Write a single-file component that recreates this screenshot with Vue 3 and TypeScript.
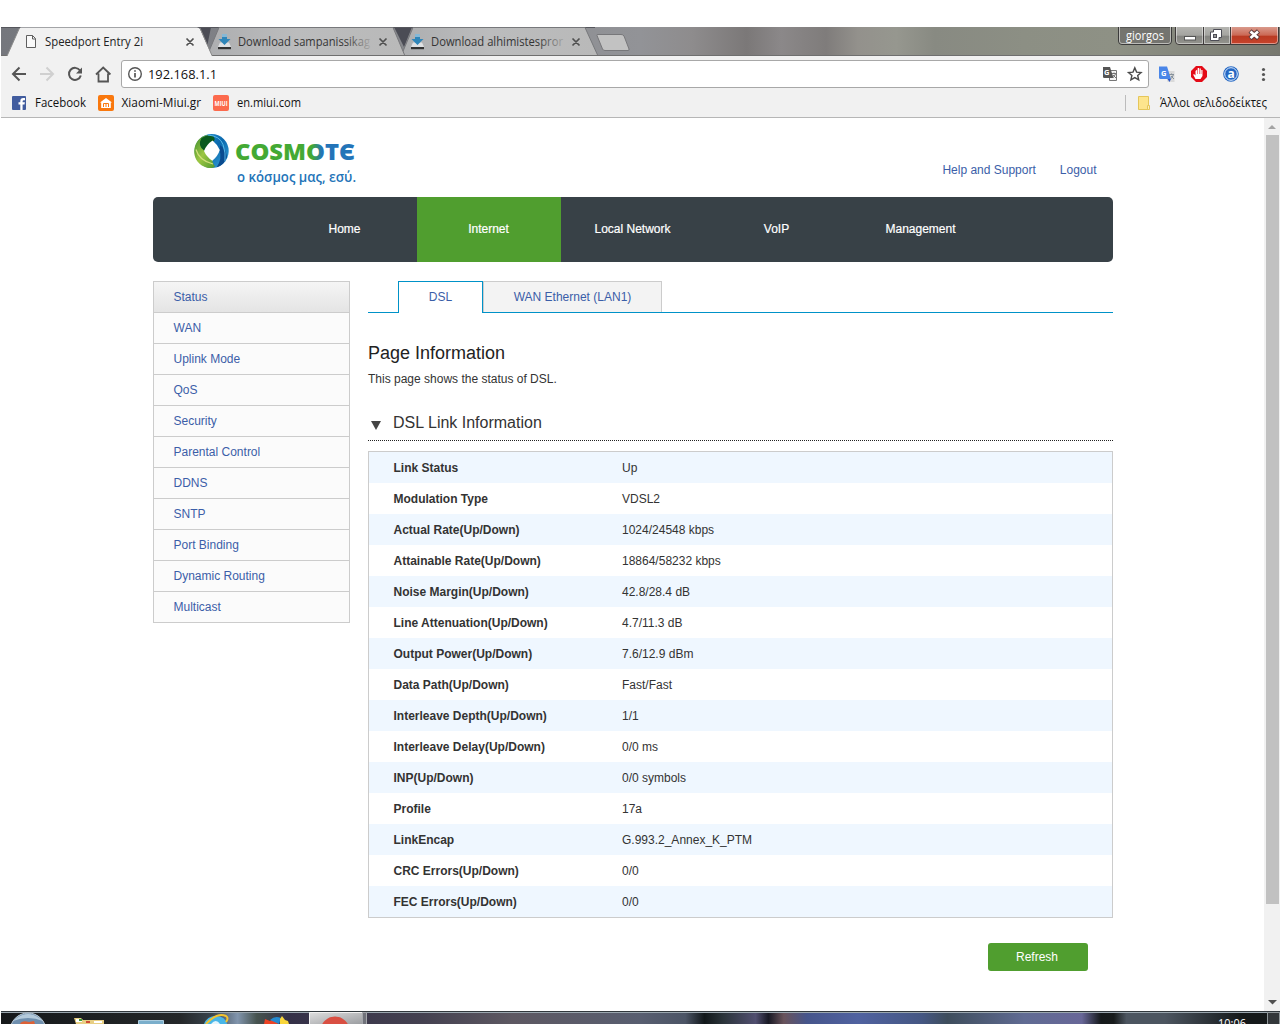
<script setup lang="ts">
interface Row {
  label: string
  value: string
}

const navItems: string[] = ['Home', 'Internet', 'Local Network', 'VoIP', 'Management']
const sideItems: string[] = [
  'Status', 'WAN', 'Uplink Mode', 'QoS', 'Security', 'Parental Control',
  'DDNS', 'SNTP', 'Port Binding', 'Dynamic Routing', 'Multicast',
]
const rows: Row[] = [
  { label: 'Link Status', value: 'Up' },
  { label: 'Modulation Type', value: 'VDSL2' },
  { label: 'Actual Rate(Up/Down)', value: '1024/24548 kbps' },
  { label: 'Attainable Rate(Up/Down)', value: '18864/58232 kbps' },
  { label: 'Noise Margin(Up/Down)', value: '42.8/28.4 dB' },
  { label: 'Line Attenuation(Up/Down)', value: '4.7/11.3 dB' },
  { label: 'Output Power(Up/Down)', value: '7.6/12.9 dBm' },
  { label: 'Data Path(Up/Down)', value: 'Fast/Fast' },
  { label: 'Interleave Depth(Up/Down)', value: '1/1' },
  { label: 'Interleave Delay(Up/Down)', value: '0/0 ms' },
  { label: 'INP(Up/Down)', value: '0/0 symbols' },
  { label: 'Profile', value: '17a' },
  { label: 'LinkEncap', value: 'G.993.2_Annex_K_PTM' },
  { label: 'CRC Errors(Up/Down)', value: '0/0' },
  { label: 'FEC Errors(Up/Down)', value: '0/0' },
]
</script>

<template>
  <div class="screen">
    <!-- Window frame with the tab strip -->
    <svg class="tabstrip" width="1280" height="29" viewBox="0 27 1280 29">
      <defs>
        <linearGradient id="glass" x1="0" x2="1" y1="0" y2="0">
          <stop offset="0" stop-color="#75777d" />
          <stop offset=".5" stop-color="#929397" />
          <stop offset=".54" stop-color="#8e8c8d" />
          <stop offset=".583" stop-color="#7b7878" />
          <stop offset=".61" stop-color="#8b8889" />
          <stop offset=".645" stop-color="#7f7c7b" />
          <stop offset=".67" stop-color="#93918c" />
          <stop offset=".7" stop-color="#96978f" />
          <stop offset=".73" stop-color="#888a82" />
          <stop offset=".8" stop-color="#8c8f84" />
          <stop offset=".87" stop-color="#8e9185" />
          <stop offset="1" stop-color="#77786f" />
        </linearGradient>
        <linearGradient id="inactive" x1="0" x2="1" y1="0" y2="0">
          <stop offset="0" stop-color="#adaeb0" />
          <stop offset=".45" stop-color="#bbbcbd" />
          <stop offset="1" stop-color="#b9b9b9" />
        </linearGradient>
        <linearGradient id="closeRed" x1="0" x2="0" y1="0" y2="1">
          <stop offset="0" stop-color="#d99a8c" />
          <stop offset=".48" stop-color="#cb6753" />
          <stop offset=".5" stop-color="#b93a22" />
          <stop offset="1" stop-color="#c8432c" />
        </linearGradient>
        <linearGradient id="capBtn" x1="0" x2="0" y1="0" y2="1">
          <stop offset="0" stop-color="#b4b4b0" />
          <stop offset=".48" stop-color="#a4a4a0" />
          <stop offset=".5" stop-color="#83837f" />
          <stop offset="1" stop-color="#95958f" />
        </linearGradient>
        <linearGradient id="fadeA" gradientUnits="userSpaceOnUse" x1="345" x2="371" y1="0" y2="0">
          <stop offset="0" stop-color="#333" /><stop offset="1" stop-color="#333" stop-opacity=".1" />
        </linearGradient>
        <linearGradient id="fadeB" gradientUnits="userSpaceOnUse" x1="538" x2="565" y1="0" y2="0">
          <stop offset="0" stop-color="#333" /><stop offset="1" stop-color="#333" stop-opacity=".1" />
        </linearGradient>
        <g id="dl">
          <path d="M2 8.500h9l2 4.500H0z" fill="#dfe1e3" />
          <path d="M0 13h13v2.200H0z" fill="#333" />
          <path d="M4 0h5v5h3.500L6.500 11 .5 5H4z" fill="#2f86b9" />
          <path d="M4 0h5v3H4z" fill="#86b8d6" />
        </g>
      </defs>
      <rect x="1" y="27" width="1279" height="29" fill="url(#glass)" />
      <path d="M204 27h208l-8 20-10-20zM199 27h12l-4 20z" fill="#4b4c55" />
      <path d="M1 27.500H595" stroke="#55565c" />
      <path d="M401 56L413 27.500H585L598 56z" fill="url(#inactive)" stroke="#77787b" />
      <path d="M207 56L219 27.500H393L405 56z" fill="url(#inactive)" stroke="#77787b" />
      <path d="M1 55.500H1280" stroke="#6f6f6f" />
      <path d="M7 56L19 29Q19.500 27.500 21 27.500H197Q199 27.500 200 29L212 56z" fill="#f1f1f1" />
      <path d="M7 56L19.500 28M200 28L212 55.500" fill="none" stroke="#8b8b8b" />
      <path d="M597 35.500Q596.500 34.500 598 34.500H621Q623 34.500 624 36L629 49Q629.500 50.500 628 50.500H605Q603 50.500 602.500 49z" fill="#c2c2c2" stroke="#77777a" />

      <path d="M26.500 35.500h6l3 3v9h-9zM32.500 35.500v3.500h3" fill="#fafafa" stroke="#5f5f5f" />
      <use href="#dl" x="218" y="34" />
      <use href="#dl" x="411" y="34" />
      <g class="ui">
        <text x="45" y="46" textLength="98" lengthAdjust="spacingAndGlyphs" fill="#222">Speedport Entry 2i</text>
        <text x="238" y="46" textLength="132" lengthAdjust="spacingAndGlyphs" fill="url(#fadeA)">Download sampanissikag</text>
        <text x="431" y="46" textLength="132" lengthAdjust="spacingAndGlyphs" fill="url(#fadeB)">Download alhimistespror</text>
      </g>
      <path d="M186.500 38.500l7 7m0-7l-7 7M379.500 38.500l7 7m0-7l-7 7M572.500 38.500l7 7m0-7l-7 7" stroke="#505050" stroke-width="1.700" />

      <path d="M1118.500 27V41q0 3.500 3.500 3.500h46q3.500 0 3.500-3.500V27z" fill="#74746f" stroke="#3b3b3b" />
      <path d="M1119.500 27V41q0 2.500 2.500 2.500h46q2.500 0 2.500-2.500V27" fill="none" stroke="#bcbcb8" />
      <text class="ui" x="1126" y="40" textLength="38" lengthAdjust="spacingAndGlyphs" fill="#fff">giorgos</text>
      <path d="M1176 27h27.500v17.500H1179q-3.500 0-3.500-3.500V27z" fill="url(#capBtn)" />
      <path d="M1204 27h26v17.500h-26z" fill="url(#capBtn)" />
      <path d="M1231 27h47v14q0 3.500-3.500 3.500H1231z" fill="url(#closeRed)" />
      <path d="M1175.500 27V41q0 3.500 3.500 3.500h96q3.500 0 3.500-3.500V27M1203.500 27v17M1230.500 27v17" fill="none" stroke="#3f3b3b" />
      <path d="M1176.500 27V41q0 2.500 2.500 2.500h23.500V27M1204.500 27v16.500h25V27M1231.500 27v16.500h43q3-.2 3-2.500V27" fill="none" stroke="#fff" stroke-opacity=".45" />
      <rect x="1184.500" y="36.500" width="11" height="3.500" fill="#fff" stroke="#555" />
      <path d="M1213.500 29.500h8v8h-2.500v3h-8.500v-8.500h3z" fill="#fff" stroke="#4c4c55" />
      <rect x="1213.500" y="34.500" width="3" height="3" fill="#999" stroke="#4c4c55" />
      <path d="M1250 31l8.500 7.500M1258.500 31l-8.500 7.500" stroke="#5a3a3c" stroke-width="4.600" />
      <path d="M1250.500 31.500l7.500 6.500M1258 31.500l-7.500 6.500" stroke="#fff" stroke-width="2.700" />
    </svg>

    <!-- Address toolbar -->
    <div class="toolbar">
      <svg class="navicons" width="120" height="34" viewBox="1 56 120 34" fill="none" stroke="#555" stroke-width="2">
        <path d="M26 74H13.500M19.500 67.500L13 74l6.500 6.500" />
        <path d="M40 74h12.500M46.500 67.500L53 74l-6.500 6.500" stroke="#d0d0d0" />
        <path d="M80 70.500a6 6 0 1 0 .8 5" />
        <path d="M82 67.500v6h-6z" fill="#555" stroke="none" />
        <path d="M96 74.500L103.200 67.500l7.200 7M98.500 73.500v8h9.500v-8" stroke-width="1.800" />
      </svg>
      <div class="omnibox">
        <svg width="16" height="16" viewBox="0 0 16 16" fill="none" stroke="#555" stroke-width="1.400">
          <circle cx="8" cy="8" r="6.300" /><path d="M8 7v4.500M8 4.300v1.500" stroke-width="1.700" />
        </svg>
        <svg class="url" width="72" height="20"><text class="addr" x="0" y="15" textLength="69" lengthAdjust="spacingAndGlyphs">192.168.1.1</text></svg>
        <svg class="boxicons" width="44" height="20" viewBox="1101 64 44 20">
          <path d="M1109.500 70.500h7v10h-7z" fill="#f4f4f4" stroke="#777" />
          <path d="M1103 67h7l3.500 11h-9.200q-1.300 0-1.300-1.300z" fill="#555" />
          <text x="1104" y="75" class="mini" fill="#fff">G</text>
          <path d="M1112 73.500h4m-2-1v1m1.500.5q-1 2.500-3 4m.5-3l3 3" stroke="#666" stroke-width=".9" fill="none" />
          <path d="M1134.800 67.900l1.800 4.200 4.500.4-3.400 3 1 4.400-3.900-2.300-3.900 2.300 1-4.400-3.400-3 4.500-.4z" fill="none" stroke="#4b4b4b" stroke-width="1.400" />
        </svg>
      </div>
      <svg width="130" height="34" viewBox="1150 56 130 34">
        <path d="M1165 71h9.500v11h-7z" fill="#dadada" />
        <path d="M1159 66.500h8l4 12.500h-10.500q-1.500 0-1.500-1.500z" fill="#4a86e8" />
        <path d="M1167.500 79h3.500l-1.500 3z" fill="#2a56c6" />
        <text x="1161" y="76" class="mini" fill="#fff">G</text>
        <path d="M1169 74.500h5m-2.500-1v1m2 0q-1 3-3 4.500m.5-3l3 3" stroke="#85909a" fill="none" />
        <path d="M1196 66h6l5 5v6l-5 5h-6l-5-5v-6z" fill="#e40b17" />
        <path d="M1195.500 71v4.500l-1.500-1.500-.8.800 2.300 4.200h5l2-3v-6h-1.200v4h-.5v-5.500h-1.300V74h-.5v-6h-1.300v6h-.5v-4.500z" fill="#fff" />
        <circle cx="1231" cy="74" r="7.800" fill="#2467c3" />
        <circle cx="1231" cy="74" r="6.300" fill="none" stroke="#dcecff" />
        <text x="1227.400" y="77.700" class="aicon" fill="#fff">a</text>
        <g fill="#555"><circle cx="1263.500" cy="69.500" r="1.600" /><circle cx="1263.500" cy="74.500" r="1.600" /><circle cx="1263.500" cy="79.500" r="1.600" /></g>
      </svg>
    </div>

    <!-- Bookmarks bar -->
    <div class="bookmarks">
      <svg width="1279" height="27" viewBox="1 90 1279 27">
        <rect x="12" y="96" width="14" height="14" rx="1" fill="#415c9e" />
        <path d="M20.300 110v-5.500H18.500v-2.200h1.800v-1.300q0-3 3-3h1.700v2.200h-1.200q-1.200 0-1.200 1.200v.9h2.300l-.4 2.200h-1.900v5.500z" fill="#fff" />
        <rect x="98" y="95" width="16" height="16" rx="2" fill="#f9780e" />
        <path d="M106 98l6 4.500h-1.200v5.500h-9.600v-5.500H100z" fill="#fff" />
        <path d="M103.500 107v-3.500h5v3.500M106 104v3" stroke="#f9780e" fill="none" />
        <rect x="213" y="95" width="16" height="16" rx="2" fill="#fc6a4d" />
        <text x="214.500" y="106" class="mini" textLength="13" lengthAdjust="spacingAndGlyphs" fill="#fff">MIUI</text>
        <path d="M1125.500 95v16" stroke="#bcbcbc" />
        <path d="M1138.500 96.500h10v13h-10z" fill="#fde58d" stroke="#e5c65a" />
        <path d="M1147.500 105.500h2v4h-2z" fill="#fdf0bd" stroke="#e5c65a" />
        <g class="ui" fill="#111">
          <text x="35" y="107" textLength="51" lengthAdjust="spacingAndGlyphs">Facebook</text>
          <text x="121.500" y="107" textLength="79.500" lengthAdjust="spacingAndGlyphs">Xiaomi-Miui.gr</text>
          <text x="237" y="107" textLength="64" lengthAdjust="spacingAndGlyphs">en.miui.com</text>
          <text x="1160" y="107" textLength="107" lengthAdjust="spacingAndGlyphs">Άλλοι σελιδοδείκτες</text>
        </g>
      </svg>
    </div>

    <div class="viewport">
      <div class="page">
        <header class="head">
          <svg class="logo" width="210" height="79" viewBox="153 118 210 79">
            <defs>
              <linearGradient id="word" gradientUnits="userSpaceOnUse" x1="236" x2="355" y1="0" y2="0">
                <stop offset="0" stop-color="#43a934" /><stop offset=".64" stop-color="#43a934" />
                <stop offset=".72" stop-color="#2374b8" /><stop offset="1" stop-color="#2374b8" />
              </linearGradient>
              <linearGradient id="leaf" x1="0" x2="1" y1="0" y2="1">
                <stop offset="0" stop-color="#3c8d2f" /><stop offset=".5" stop-color="#9cc642" /><stop offset="1" stop-color="#4f982f" />
              </linearGradient>
              <linearGradient id="sea" x1="0" x2="1" y1="0" y2="1">
                <stop offset="0" stop-color="#2698d4" /><stop offset=".5" stop-color="#0b69ae" /><stop offset="1" stop-color="#39a7dc" />
              </linearGradient>
            </defs>
            <circle cx="211.700" cy="151" r="17" fill="url(#sea)" />
            <path d="M204 136C192 141 190 160 204 166.500C209 169 214 168 215 166.500Q212 162 212.500 160L204 150.500Q204 143 212 138Q208 134 204 136z" fill="url(#leaf)" />
            <path d="M201.500 138q5.500-3.500 10.500-2.500Q216 138 214 141Q208 143 204.500 151Q197 146 201.500 138z" fill="#0a5a1e" />
            <path d="M219.500 150q3 9-3 17.500q8-2.500 10.500-10.500q-1-8-7-12z" fill="#0a4b8f" />
            <path d="M208 135q12 1 15 9.500t2 17" stroke="#58b8e6" stroke-width="1" fill="none" />
            <path d="M196 149.500q3 11 17 14.500" stroke="#d2df7b" stroke-width="1.200" fill="none" />
            <path d="M212.500 140.500Q217 144 219.800 150Q218 156 212.300 160.800Q206.500 157 204 151Q206.500 144.500 212.500 140.500z" fill="#fff" />
          </svg>
          <svg class="logotext" width="0" height="79" viewBox="363 118 1 79" overflow="visible">
            <text class="brand" x="235" y="159.500" textLength="120" lengthAdjust="spacingAndGlyphs" fill="url(#word)">COSMOTЄ</text>
            <text class="slogan" x="237" y="182" textLength="119" lengthAdjust="spacingAndGlyphs">ο κόσμος μας, εσύ.</text>
          </svg>
          <div class="links"><a>Help and Support</a><a>Logout</a></div>
        </header>

        <nav class="mainnav">
          <a v-for="n in navItems" :key="n" :class="{ on: n === 'Internet' }">{{ n }}</a>
        </nav>

        <div class="columns">
          <ul class="side">
            <li v-for="s in sideItems" :key="s" :class="{ on: s === 'Status' }">{{ s }}</li>
          </ul>
          <main class="main">
            <div class="tabs">
              <a class="tab on">DSL</a>
              <a class="tab off">WAN Ethernet (LAN1)</a>
            </div>
            <h1>Page Information</h1>
            <p>This page shows the status of DSL.</p>
            <h2><i class="tri"></i><span>DSL Link Information</span></h2>
            <div class="table">
              <div v-for="r in rows" :key="r.label" class="row">
                <b>{{ r.label }}</b><span>{{ r.value }}</span>
              </div>
            </div>
            <button class="refresh">Refresh</button>
          </main>
        </div>
      </div>
      <div class="scroll">
        <svg width="16" height="17"><path d="M4 11l4-4 4 4z" fill="#a3a3a3" /></svg>
        <div class="thumb"></div>
        <svg width="16" height="17"><path d="M4 6h9l-4.500 4.500z" fill="#505050" /></svg>
      </div>
    </div>

    <!-- Desktop taskbar -->
    <svg class="taskbar" width="1280" height="13" viewBox="0 1011 1280 13">
      <defs>
        <linearGradient id="bar" x1="0" x2="1" y1="0" y2="0">
          <stop offset="0" stop-color="#15181a" /><stop offset=".14" stop-color="#242729" />
          <stop offset=".165" stop-color="#39444d" /><stop offset=".185" stop-color="#8195ad" />
          <stop offset=".2" stop-color="#46534f" /><stop offset=".225" stop-color="#343047" />
          <stop offset=".33" stop-color="#444150" /><stop offset=".4" stop-color="#5d5862" />
          <stop offset=".5" stop-color="#585e70" /><stop offset=".535" stop-color="#4c5566" />
          <stop offset=".55" stop-color="#11171a" /><stop offset=".565" stop-color="#2b343b" />
          <stop offset=".59" stop-color="#514f70" /><stop offset=".6" stop-color="#171824" />
          <stop offset=".612" stop-color="#69535b" /><stop offset=".63" stop-color="#46558b" />
          <stop offset=".67" stop-color="#5062a0" /><stop offset=".72" stop-color="#455783" />
          <stop offset=".74" stop-color="#3e4d5c" /><stop offset=".8" stop-color="#606b93" />
          <stop offset=".845" stop-color="#686798" /><stop offset=".86" stop-color="#15191b" />
          <stop offset=".87" stop-color="#171b1c" /><stop offset=".88" stop-color="#4c5560" />
          <stop offset=".91" stop-color="#4c5560" /><stop offset=".97" stop-color="#15191a" />
          <stop offset="1" stop-color="#15191a" />
        </linearGradient>
        <linearGradient id="task" x1="0" x2="1" y1="0" y2="1">
          <stop offset="0" stop-color="#ddd" /><stop offset="1" stop-color="#9a9ca0" />
        </linearGradient>
      </defs>
      <rect x="1" y="1011" width="1279" height="13" fill="url(#bar)" />
      <path d="M1 1011.500H1280" stroke="#30373c" /><path d="M1 1012.500H1280" stroke="#9ba7af" />
      <circle cx="28" cy="1031" r="18" fill="#6f8fae" stroke="#b9c8d4" />
      <path d="M13 1021Q28 1007 43 1021Q28 1015 13 1021z" fill="#b4cadb" />
      <path d="M20 1024q2-4 9-2l5-1 1 3z" fill="#dd6136" />
      <path d="M74 1018h7l2 2h21v4H76z" fill="#e8cf84" /><path d="M76 1019h6v3h-6zM94 1021h8v2h-8z" fill="#fff" />
      <path d="M79 1019h3v2h-3z" fill="#3c9b39" /><path d="M86 1021h4v2h-4z" fill="#cf4c36" />
      <path d="M138.500 1020.500h25v4h-25z" fill="#7aaecb" stroke="#adcddf" />
      <path d="M204 1024Q207 1016 216 1016T227 1024z" fill="#48b6e8" /><path d="M211 1024q5-6 9 0z" fill="#e4f6fd" />
      <path d="M206 1024Q217 1012 226 1016Q229 1018 226 1022" fill="none" stroke="#f3c32e" stroke-width="2" />
      <path d="M264 1024l1-5 5 2 4-3 4 6z" fill="#ed4325" /><path d="M270 1020q5-5 11-2l-2 6z" fill="#248bd1" />
      <path d="M280 1024v-5l2-3 3 4 3 1 1 3z" fill="#f9d63b" />
      <path d="M309.500 1012.500h53v12h-53z" fill="url(#task)" stroke="#f1f1f1" />
      <path d="M362.500 1012.500h4v12h-4z" fill="#70727a" stroke="#a4a6ab" />
      <circle cx="335" cy="1031" r="14.500" fill="#d94f42" />
      <text x="1218" y="1027.500" textLength="28" lengthAdjust="spacingAndGlyphs" class="ui" fill="#fff">10:06</text>
      <path d="M1267.500 1012.500h12v12h-12z" fill="#33373a" stroke="#8f9699" />
    </svg>
  </div>
</template>

<style>
html, body { margin: 0; background: #fff; overflow: hidden; }
</style>

<style scoped>
.screen {
  width: 1280px; height: 1024px; padding-top: 27px; box-sizing: border-box; overflow: hidden;
  display: flex; flex-direction: column; background: #fff;
  font-family: "Liberation Sans", Arial, sans-serif; font-size: 12px; color: #333;
}
svg { display: block; flex: none; }
.ui { font-family: "Open Sans", "Noto Sans", sans-serif; font-size: 12px; }
.addr { font-family: "Open Sans", sans-serif; font-size: 13.5px; fill: #111; }
.mini { font-family: "Open Sans", sans-serif; font-size: 7.5px; font-weight: bold; }
.aicon { font-family: "Open Sans", sans-serif; font-size: 12px; font-weight: bold; }
.brand { font-family: "Open Sans", "Noto Sans", sans-serif; font-size: 23.5px; font-weight: 800; }
.slogan { font-family: "Open Sans", "Noto Sans", sans-serif; font-size: 13.5px; font-weight: 600; fill: #2374b8; }
.toolbar { height: 34px; margin-left: 1px; background: #f1f1f1; display: flex; flex: none; }
.omnibox {
  width: 1028px; height: 28px; margin: 4px 1px 0 0; box-sizing: border-box; flex: none;
  border: 1px solid #a8a8a8; border-radius: 3px; background: #fff;
  display: flex; align-items: center; padding-left: 5px;
}
.url { margin-left: 5px; }
.boxicons { margin-left: auto; margin-right: 3px; }
.bookmarks { height: 27px; margin-left: 1px; background: #f1f1f1; border-bottom: 1px solid #b6b6b6; flex: none; }
.viewport { height: 893px; flex: none; display: flex; }
.page { width: 960px; margin-left: 153px; }
.head { height: 79px; display: flex; }
.logotext { width: 1px; overflow: visible; }
.links { display: flex; gap: 24px; margin-left: auto; padding: 45px 16.500px 0 0; line-height: 14px; color: #3b5ea8; }
.mainnav {
  height: 65px; border-radius: 5px; background: #384147; color: #fff; display: flex;
  padding-left: 120px; box-sizing: border-box; line-height: 64px;
}
.mainnav a { width: 144px; text-align: center; text-indent: -1px; -webkit-text-stroke: .2px #fff; }
.mainnav .on { background: #509e2f; }
.columns { display: flex; gap: 18px; margin-top: 19px; }
.side {
  width: 197px; height: 342px; box-sizing: border-box; margin: 0; padding: 0; list-style: none;
  border: 1px solid #ccc; border-bottom: 0; background: #fbfbfb; color: #3b5ea8;
}
.side li { height: 31px; box-sizing: border-box; border-bottom: 1px solid #ccc; padding-left: 19.500px; line-height: 30px; }
.side .on { background: linear-gradient(#f5f5f5, #e4e4e4); }
.main { width: 745px; display: flex; flex-direction: column; }
.tabs { height: 32px; box-sizing: border-box; border-bottom: 1px solid #0092c8; padding-left: 30px; display: flex; color: #3b5ea8; }
.tab { height: 31px; box-sizing: border-box; border: 1px solid #ccc; border-bottom: 0; line-height: 30px; text-align: center; }
.tab.on { width: 85px; height: 32px; border-color: #0092c8; background: #fff; }
.tab.off { width: 179px; background: #f3f3f3; }
h1 { font-size: 18px; font-weight: normal; line-height: 20px; margin: 30px 0 0; color: #222; }
p { margin: 9px 0 0; line-height: 14px; }
h2 {
  margin: 24px 0 0; height: 31px; box-sizing: border-box; border-bottom: 1px dotted #222; display: flex;
  font-size: 16px; font-weight: normal; line-height: 26px; padding-left: 3px;
}
.tri { border: 5px solid transparent; border-top: 9px solid #444; border-bottom: 0; height: 0; width: 0; margin: 11px 12px 0 0; }
.table { margin-top: 10px; border: 1px solid #ccc; }
.row { height: 31px; line-height: 32px; padding-left: 24.500px; display: flex; }
.row:nth-child(odd) { background: #eff7ff; }
.row b { width: 228.500px; }
.refresh {
  align-self: flex-end; width: 100px; height: 28px; margin: 25px 25px 0 0; padding: 0 2px 0 0;
  border: 0; border-radius: 3px; background: #509e2f; color: #fff; font: 12px "Liberation Sans", Arial, sans-serif;
}
.scroll { width: 16px; margin-left: auto; background: #f1f1f1; display: flex; flex-direction: column; }
.thumb { height: 769px; margin: 0 1px 0 2px; background: #c1c1c1; }
.scroll svg:last-child { margin-top: auto; }
</style>
